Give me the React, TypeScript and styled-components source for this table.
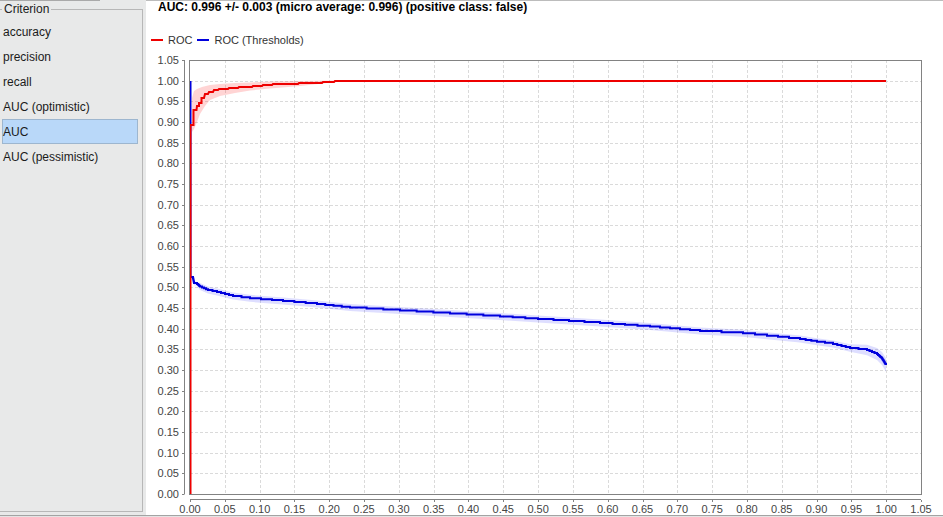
import React from 'react';
import styled, { createGlobalStyle } from 'styled-components';

const GlobalStyle = createGlobalStyle`
  html, body { margin: 0; padding: 0; background: #ffffff; }
  body { font-family: "Liberation Sans", Arial, sans-serif; }
`;

const Page = styled.div`
  width: 943px;
  height: 517px;
  display: flex;
  flex-direction: column;
  overflow: hidden;
  background: #ffffff;
`;

const Body = styled.div`
  display: flex;
  height: 515px;
  flex: none;
`;

const Footer = styled.div`
  height: 1px;
  border-top: 1px solid #a3a3a3;
  background: #e4e4e4;
`;

const Sidebar = styled.aside`
  width: 146px;
  flex: none;
  background: #e8e9e9;
  display: flex;
  flex-direction: column;
`;

const TabEdge = styled.div`
  width: 100px;
  height: 1px;
  background: #a9a9a9;
`;

const Group = styled.fieldset`
  margin: 1px 0 0 0;
  padding: 3px 4px 0 2px;
  width: 143px;
  height: 510px;
  min-width: 0;
  box-sizing: border-box;
  border: 1px solid #b7b7b7;
  border-left: none;
`;

const GroupTitle = styled.legend`
  margin: 0;
  padding: 0 2px;
  font-size: 12px;
  line-height: 14px;
  color: #222222;
`;

const Row = styled.div<{ $selected?: boolean }>`
  height: 25px;
  box-sizing: border-box;
  display: flex;
  align-items: center;
  padding-left: 0;
  font-size: 12px;
  color: #1b1b1b;
  border: 1px solid ${(p) => (p.$selected ? '#9db6cf' : 'transparent')};
  background: ${(p) => (p.$selected ? '#b9d8f9' : 'transparent')};
`;

const ChartPanel = styled.section`
  flex: 1;
  min-width: 0;
  background: #ffffff;
  border-top: 1px solid #bcbcbc;
  display: flex;
  flex-direction: column;
`;

const Title = styled.div`
  padding-left: 12px;
  font-weight: bold;
  font-size: 12px;
  line-height: 13px;
  height: 13px;
  color: #000000;
  white-space: nowrap;
`;

const LegendRow = styled.div`
  display: flex;
  align-items: center;
  margin-top: 19px;
  padding-left: 5px;
  height: 14px;
  font-size: 11px;
  color: #333333;
`;

const LegendItem = styled.div`
  display: flex;
  align-items: center;
  & + & {
    margin-left: 5px;
  }
`;

const Swatch = styled.span<{ $color: string }>`
  width: 12px;
  height: 2px;
  margin-right: 5px;
  background: ${(p) => p.$color};
`;

const Plot = styled.svg`
  display: block;
  flex: none;
  font-family: "Liberation Sans", Arial, sans-serif;
`;

type Pt = [number, number];

const X0 = 190;
const X1 = 921;
const Y0 = 494;
const Y1 = 60;
const xs = (u: number) => X0 + (u * (X1 - X0)) / 1.05;
const ys = (v: number) => Y0 - (v * (Y0 - Y1)) / 1.05;
const ticks = Array.from({ length: 22 }, (_, i) => i * 0.05);

const redLine: Pt[] = [
  [190.5, 494], [190.5, 125], [193.5, 125], [193.5, 110], [196.5, 110], [197, 106],
  [199, 106], [199, 103], [201.5, 103], [201.5, 98], [204, 98], [205, 94], [208, 94],
  [209, 92], [213, 92], [214, 90], [218, 90], [219, 89], [228, 89], [229, 88], [238, 88],
  [239, 87], [252, 87], [253, 86], [262, 86], [263, 85], [272, 85], [273, 84], [298, 84],
  [299, 83], [322, 83], [323, 82], [334, 82], [335, 81], [886, 81],
];

const redBand: Pt[] = [
  [192, 98], [194, 91], [197, 89], [202, 87], [210, 85], [220, 84], [235, 83], [250, 82.5],
  [270, 81.5], [300, 81], [336, 80.5],
  [336, 82], [300, 86], [270, 88.5], [250, 90.5], [235, 93], [220, 96], [210, 100],
  [205, 106], [200, 114], [197, 122], [194, 129], [192, 132],
];

const blueCurve: Pt[] = [
  [190.5, 277], [193, 278], [194, 283], [197, 284], [200, 286.5], [208, 290], [217, 292],
  [233, 296], [250, 298.3], [283, 301], [317, 304], [350, 307.5], [400, 310.5], [450, 313.5],
  [500, 316.5], [538, 319], [600, 323], [650, 326.5], [700, 331], [743, 333.3], [767, 335.7],
  [800, 339], [817, 341.7], [833, 344], [850, 348], [867, 350], [877, 354], [882, 358.5],
  [886, 365],
];

const stepify = (pts: Pt[]): Pt[] => {
  const out: Pt[] = [pts[0]];
  for (let i = 1; i < pts.length; i++) {
    const [ax, ay] = pts[i - 1];
    const [bx, by] = pts[i];
    const n = Math.max(1, Math.round(Math.abs(by - ay)));
    for (let k = 1; k <= n; k++) {
      const x = ax + ((bx - ax) * k) / n;
      const yPrev = ay + ((by - ay) * (k - 1)) / n;
      const y = ay + ((by - ay) * k) / n;
      out.push([x, yPrev]);
      out.push([x, y]);
    }
  }
  return out;
};

const blueLine: Pt[] = [[190.5, 81], ...stepify(blueCurve)];

const bandWidth = (x: number) => (x < 200 ? 2 : x > 840 ? 3 + (x - 840) / 12 : 3.5);
const blueBand: Pt[] = [
  ...blueCurve.map(([x, y]) => [x, y - bandWidth(x)] as Pt),
  ...blueCurve
    .slice()
    .reverse()
    .map(([x, y]) => [x, y + bandWidth(x)] as Pt),
];

const toPoints = (pts: Pt[]) => pts.map(([x, y]) => `${x},${y}`).join(' ');
const px = (v: number) => Math.round(v) + 0.5;

const RocChart: React.FC = () => (
  <Plot width={797} height={468} viewBox="146 47 797 468">
    {ticks.slice(1, 21).map((t) => (
      <line
        key={`v${t}`}
        x1={px(xs(t))}
        x2={px(xs(t))}
        y1={Y1}
        y2={Y0}
        stroke="#dadada"
        strokeWidth={1}
        strokeDasharray="3 2"
      />
    ))}
    {ticks.slice(1, 21).map((t) => (
      <line
        key={`h${t}`}
        x1={X0}
        x2={X1}
        y1={px(ys(t))}
        y2={px(ys(t))}
        stroke="#dadada"
        strokeWidth={1}
        strokeDasharray="3 2"
      />
    ))}

    <polygon points={toPoints(blueBand)} fill="rgba(70,70,255,0.18)" />
    <polygon points={toPoints(redBand)} fill="rgba(255,60,60,0.22)" />

    <polyline points={toPoints(blueLine)} fill="none" stroke="#0000dd" strokeWidth={2} />
    <polyline points={toPoints(redLine)} fill="none" stroke="#ee0000" strokeWidth={2} />

    <rect x={189.5} y={60.5} width={732} height={434} fill="none" stroke="#828282" strokeWidth={1} />

    <line x1={184.5} x2={184.5} y1={60} y2={494.5} stroke="#828282" />
    <line x1={190} x2={921} y1={499.5} y2={499.5} stroke="#828282" />
    {ticks.map((t) => (
      <g key={`yt${t}`}>
        <line x1={182} x2={184} y1={px(ys(t))} y2={px(ys(t))} stroke="#828282" />
        <text x={179} y={ys(t) + 4} fontSize={11} fill="#444" textAnchor="end">
          {t.toFixed(2)}
        </text>
      </g>
    ))}
    {ticks.map((t) => (
      <g key={`xt${t}`}>
        <line x1={px(xs(t))} x2={px(xs(t))} y1={500} y2={502} stroke="#828282" />
        <text x={xs(t)} y={513} fontSize={11} fill="#444" textAnchor="middle">
          {t.toFixed(2)}
        </text>
      </g>
    ))}
  </Plot>
);

const criteria = ['accuracy', 'precision', 'recall', 'AUC (optimistic)', 'AUC', 'AUC (pessimistic)'];

export default function App() {
  return (
    <Page>
      <GlobalStyle />
      <Body>
        <Sidebar>
          <TabEdge />
          <Group>
            <GroupTitle>Criterion</GroupTitle>
            {criteria.map((c) => (
              <Row key={c} $selected={c === 'AUC'}>
                {c}
              </Row>
            ))}
          </Group>
        </Sidebar>
        <ChartPanel>
          <Title>AUC: 0.996 +/- 0.003 (micro average: 0.996) (positive class: false)</Title>
          <LegendRow>
            <LegendItem>
              <Swatch $color="#ee0000" />
              ROC
            </LegendItem>
            <LegendItem>
              <Swatch $color="#0000dd" />
              ROC (Thresholds)
            </LegendItem>
          </LegendRow>
          <RocChart />
        </ChartPanel>
      </Body>
      <Footer />
    </Page>
  );
}
